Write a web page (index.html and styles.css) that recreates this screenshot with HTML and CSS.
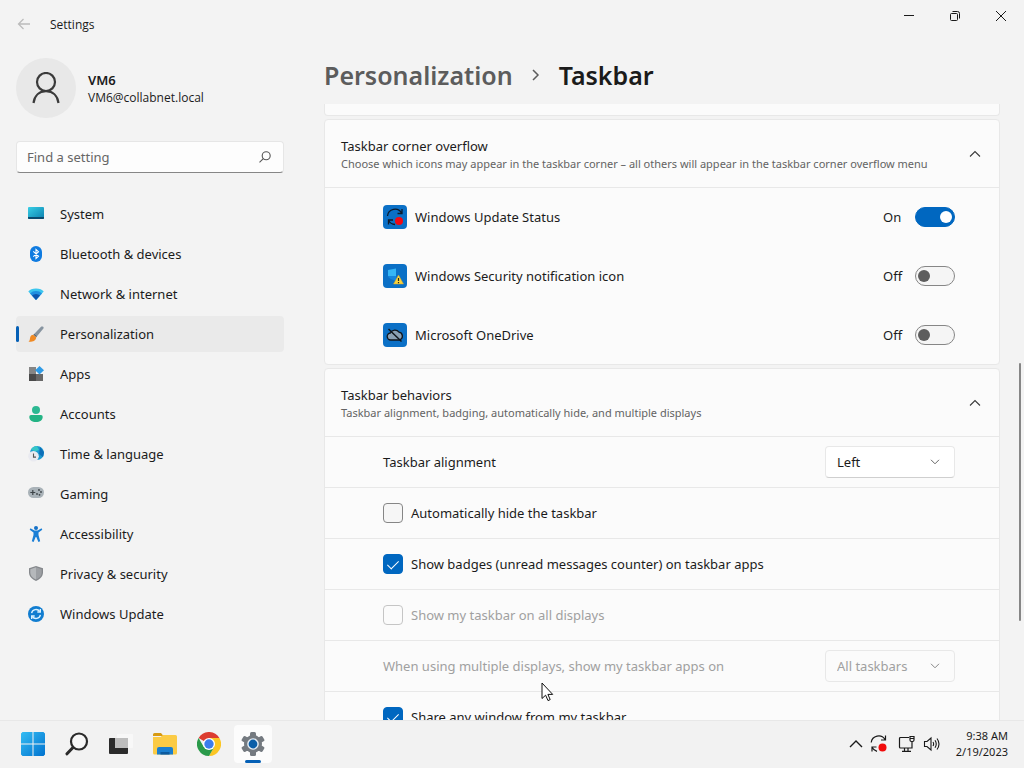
FILE: index.html
```html
<!DOCTYPE html>
<html lang="en">
<head>
    <meta charset="UTF-8">
    <meta name="viewport" content="width=device-width, initial-scale=1.0">
    <title>Settings</title>
    <link rel="stylesheet" href="styles.css">
</head>
<body>
    <div class="window">
        <header class="titlebar">
            <button class="back" aria-label="Back" disabled>
                <svg width="14" height="12" viewBox="0 0 14 12" fill="none" stroke="#bcbcbc" stroke-width="1.3"><path d="M13 6H1.5M6.5 1L1.5 6l5 5" /></svg>
            </button>
            <span class="app-name">Settings</span>
            <div class="window-buttons">
                <button aria-label="Minimize"><svg width="10" height="10" viewBox="0 0 10 10" fill="none" stroke="#1a1a1a"><path d="M0 4.5h10" /></svg></button>
                <button aria-label="Restore"><svg width="10" height="10" viewBox="0 0 10 10" fill="none" stroke="#1a1a1a"><rect x=".5" y="2.5" width="7" height="7" rx="1" /><path d="M2.5.5H7.500Q9.500.5 9.500 2.500V7.500" /></svg></button>
                <button aria-label="Close"><svg width="10" height="10" viewBox="0 0 10 10" fill="none" stroke="#1a1a1a"><path d="M0 0l10 10M10 0L0 10" /></svg></button>
            </div>
        </header>

        <div class="layout">
            <aside class="sidebar">
                <a class="profile" href="#">
                    <span class="avatar">
                        <svg width="28" height="32" viewBox="0 0 28 32" fill="none" stroke="#3a3a3a" stroke-width="2.2"><circle cx="14" cy="10" r="9" /><path d="M1.500 31C2.500 23.500 7.500 19.200 14 19.200S25.500 23.500 26.500 31" /></svg>
                    </span>
                    <span class="who">
                        <strong>VM6</strong>
                        <small>VM6@collabnet.local</small>
                    </span>
                </a>

                <div class="search">
                    <input type="text" placeholder="Find a setting" aria-label="Find a setting">
                    <svg width="12" height="12" viewBox="0 0 12 12" fill="none" stroke="#555" stroke-width="1.1"><circle cx="7.200" cy="4.700" r="4" /><path d="M4.300 7.600L.5 11.400" /></svg>
                </div>

                <nav class="nav">
                    <a href="#">
                        <svg width="16" height="16" viewBox="0 0 16 16"><defs><linearGradient id="gSys" x1="0" y1="0" x2="1" y2="1"><stop offset="0" stop-color="#38cfe6" /><stop offset="1" stop-color="#0b7fae" /></linearGradient></defs><rect y="1" width="16" height="12" rx="1" fill="url(#gSys)" /><path d="M0 11h16v1a1 1 0 0 1-1 1H1a1 1 0 0 1-1-1z" fill="#0a4a6e" /></svg>
                        System
                    </a>
                    <a href="#">
                        <svg width="16" height="16" viewBox="0 0 16 16"><rect x="2" width="12" height="16" rx="6" fill="#0f7be0" /><path d="M5.300 5.300l5.200 5L8 12.600V3.400l2.500 2.300-5.200 5" fill="none" stroke="#fff" stroke-width="1.100" /></svg>
                        Bluetooth &amp; devices
                    </a>
                    <a href="#">
                        <svg width="16" height="16" viewBox="0 0 16 16"><path d="M.3 5.500Q2.500 2.500 8 2.500T15.700 5.500L8 14z" fill="#3cc6ee" /><path d="M2 7.400Q4.500 5 8 5T14 7.400L8 14z" fill="#1f8fe0" /><path d="M4 9.600Q5.500 8 8 8T12 9.600L8 14z" fill="#0d55ad" /></svg>
                        Network &amp; internet
                    </a>
                    <a class="active" href="#" aria-current="page">
                        <svg width="16" height="16" viewBox="0 0 16 16"><path d="M14.600.4c1 .3 1.300 1.200.8 2L9.200 10 6.400 7.700 13.300.6z" fill="#8794a0" /><path d="M6.400 7.700L9.200 10l-1 1.200-2.900-2.400z" fill="#5d6872" /><path d="M5.200 8.700l3 2.500c0 3.300-3.400 4.800-7.700 4.500 1.700-1.200 1.100-2.600 1.800-4.700.5-1.500 1.700-2.300 2.900-2.300z" fill="#f08a24" /></svg>
                        Personalization
                    </a>
                    <a href="#">
                        <svg width="16" height="16" viewBox="0 0 16 16"><rect x="1" y="1" width="7" height="7" fill="#858585" /><rect x="1" y="8" width="7" height="7" fill="#4a4a4a" /><rect x="8" y="8" width="7" height="7" fill="#686868" /><path d="M11.500 0L16 4.300 11.500 8.600 7.200 4.300z" fill="#2f9be6" /></svg>
                        Apps
                    </a>
                    <a href="#">
                        <svg width="16" height="16" viewBox="0 0 16 16"><circle cx="8" cy="4" r="4" fill="#2cb892" /><path d="M3 9h10a1.700 1.700 0 0 1 1.700 1.700C14.700 14 12 16 8 16s-6.700-2-6.700-5.300A1.700 1.700 0 0 1 3 9z" fill="#23b384" /></svg>
                        Accounts
                    </a>
                    <a href="#">
                        <svg width="16" height="16" viewBox="0 0 16 16"><circle cx="9" cy="7" r="7" fill="#1b9ad0" /><path d="M9 0a7 7 0 0 0-6 3.500l4 2L11 4z" fill="#36c6c8" /><path d="M12 1l4 5-1 5-4-3z" fill="#0d6fb8" /><circle cx="5.500" cy="10.300" r="5.300" fill="#e9eaf0" /><path d="M5.500 7.500v3.600H8" fill="none" stroke="#555" stroke-width="1.100" /></svg>
                        Time &amp; language
                    </a>
                    <a href="#">
                        <svg width="16" height="16" viewBox="0 0 16 16"><rect y="1" width="16" height="11" rx="5.500" fill="#a9b2b8" /><path d="M4.800 4v5M2.300 6.500h5" stroke="#3c4347" stroke-width="1.200" /><g fill="#3c4347"><circle cx="11" cy="4" r=".9" /><circle cx="9" cy="8" r=".9" /><circle cx="13" cy="6" r=".9" /><circle cx="11.500" cy="8.800" r=".9" /></g></svg>
                        Gaming
                    </a>
                    <a href="#">
                        <svg width="16" height="16" viewBox="0 0 16 16"><circle cx="8" cy="2" r="2" fill="#1672c8" /><path d="M2.500 2.300L6.300 4.600h3.400l3.800-2.300.8 1.500-3.800 2.700V9l1.700 6.300-1.800.6L8.300 11h-.6l-2.100 4.900-1.800-.6L5.500 9V6.500L1.700 3.800z" fill="#1b7fd6" /></svg>
                        Accessibility
                    </a>
                    <a href="#">
                        <svg width="16" height="16" viewBox="0 0 16 16"><path d="M8 0l7 2.300v4C15 10.500 12 13.300 8 15 4 13.300 1 10.500 1 6.300v-4z" fill="#85888c" /><path d="M8 1.300l5.700 1.900v3.100c0 3.500-2.400 5.800-5.700 7.200z" fill="#9c9fa3" /><path d="M8 1.300L2.300 3.200v3.100c0 3.500 2.400 5.800 5.700 7.200z" fill="#b5b8bb" /></svg>
                        Privacy &amp; security
                    </a>
                    <a href="#">
                        <svg width="16" height="16" viewBox="0 0 16 16"><circle cx="8" cy="8" r="8" fill="#117dd0" /><g fill="none" stroke="#d9f1ff" stroke-width="1.400"><path d="M3.600 7.200A4.500 4.500 0 0 1 11.700 5.500M12.400 8.800A4.500 4.500 0 0 1 4.300 10.500" /><path d="M12.300 3v3H9.300M3.700 13v-3h3" /></g></svg>
                        Windows Update
                    </a>
                </nav>
            </aside>

            <main class="main">
                <h1 class="crumbs">
                    <a href="#">Personalization</a>
                    <svg width="8" height="12" viewBox="0 0 8 12" fill="none" stroke="#5c5c5c" stroke-width="1.500"><path d="M1 1l5 5-5 5" /></svg>
                    <span>Taskbar</span>
                </h1>

                <div class="scroller">
                    <section class="card card-tail"></section>

                    <section class="card">
                        <button class="card-head" aria-expanded="true">
                            <span>
                                <b>Taskbar corner overflow</b>
                                <small>Choose which icons may appear in the taskbar corner – all others will appear in the taskbar corner overflow menu</small>
                            </span>
                            <svg width="12" height="8" viewBox="0 0 12 8" fill="none" stroke="#3a3a3a" stroke-width="1.100"><path d="M1 6.500l5-5 5 5" /></svg>
                        </button>
                        <div class="row tall">
                            <svg width="24" height="24" viewBox="0 0 24 24"><rect width="24" height="24" rx="4" fill="#0b70c6" /><g fill="none" stroke="#0e1a2b" stroke-width="1.300"><path d="M4.500 11A7.500 7.500 0 0 1 18.500 8M19 4v4.500h-4.500M5.500 19.500V15H10M5.500 15.500A8 8 0 0 0 12 19.500" /></g><circle cx="16" cy="16" r="4" fill="#f00a14" /></svg>
                            <label for="update">Windows Update Status</label>
                            <span class="state">On</span>
                            <input id="update" class="toggle" type="checkbox" role="switch" checked>
                        </div>
                        <div class="row tall">
                            <svg width="24" height="24" viewBox="0 0 24 24"><rect width="24" height="24" rx="4" fill="#0b70c6" /><path d="M5 6l8-1.500V12H5z" fill="#35b5f5" /><path d="M5 12h8v5C8 15.500 5.300 14 5 12z" fill="#1585dc" /><path d="M15.500 11l5 9h-10z" fill="#fbd43a" stroke="#c9a23a" stroke-width=".5" /><path d="M15.500 14v3M15.500 18v1.200" stroke="#222" stroke-width="1.200" /></svg>
                            <label for="security">Windows Security notification icon</label>
                            <span class="state">Off</span>
                            <input id="security" class="toggle" type="checkbox" role="switch">
                        </div>
                        <div class="row tall">
                            <svg width="24" height="24" viewBox="0 0 24 24"><rect width="24" height="24" rx="4" fill="#0b70c6" /><path d="M8 17a3.500 3.500 0 0 1-.6-7A5 5 0 0 1 16 9.200 4 4 0 0 1 16.500 17z" fill="#8aa0b3" stroke="#10151c" stroke-width="1.300" /><path d="M5.500 6l13 12.500" stroke="#10151c" stroke-width="1.500" /></svg>
                            <label for="onedrive">Microsoft OneDrive</label>
                            <span class="state">Off</span>
                            <input id="onedrive" class="toggle" type="checkbox" role="switch">
                        </div>
                    </section>

                    <section class="card">
                        <button class="card-head" aria-expanded="true">
                            <span>
                                <b>Taskbar behaviors</b>
                                <small>Taskbar alignment, badging, automatically hide, and multiple displays</small>
                            </span>
                            <svg width="12" height="8" viewBox="0 0 12 8" fill="none" stroke="#3a3a3a" stroke-width="1.100"><path d="M1 6.500l5-5 5 5" /></svg>
                        </button>
                        <div class="row">
                            <label for="alignment">Taskbar alignment</label>
                            <div class="select">
                                <select id="alignment"><option>Left</option><option>Center</option></select>
                                <svg width="10" height="6" viewBox="0 0 10 6" fill="none" stroke="#666"><path d="M1 .8L5 4.800 9 .8" /></svg>
                            </div>
                        </div>
                        <div class="row">
                            <input id="autohide" class="check" type="checkbox">
                            <label for="autohide">Automatically hide the taskbar</label>
                        </div>
                        <div class="row">
                            <input id="badges" class="check" type="checkbox" checked>
                            <label for="badges">Show badges (unread messages counter) on taskbar apps</label>
                        </div>
                        <div class="row disabled">
                            <input id="all" class="check" type="checkbox" disabled>
                            <label for="all">Show my taskbar on all displays</label>
                        </div>
                        <div class="row disabled">
                            <label for="multi">When using multiple displays, show my taskbar apps on</label>
                            <div class="select">
                                <select id="multi" disabled><option>All taskbars</option></select>
                                <svg width="10" height="6" viewBox="0 0 10 6" fill="none" stroke="#888"><path d="M1 .8L5 4.800 9 .8" /></svg>
                            </div>
                        </div>
                        <div class="row">
                            <input id="share" class="check" type="checkbox" checked>
                            <label for="share">Share any window from my taskbar</label>
                        </div>
                    </section>
                    <div class="thumb"></div>
                </div>
            </main>
        </div>
    </div>

    <footer class="taskbar">
        <div class="apps">
            <button aria-label="Start">
                <svg width="24" height="24" viewBox="0 0 24 24"><defs><linearGradient id="gWin" x1="0" y1="0" x2="1" y2="1"><stop offset="0" stop-color="#35bdf3" /><stop offset="1" stop-color="#0072cf" /></linearGradient></defs><path d="M1.500 0H11.500V11.500H0V1.500zM12.500 0H22.500L24 1.500V11.500H12.500zM0 12.500H11.500V24H1.500L0 22.500zM12.500 12.500H24V22.500L22.500 24H12.500z" fill="url(#gWin)" /></svg>
            </button>
            <button aria-label="Search">
                <svg width="24" height="24" viewBox="0 0 24 24" fill="none" stroke="#2b2b2b"><circle cx="14" cy="9.500" r="8" fill="#f8f8f8" stroke-width="2.200" /><path d="M8 15.500L2 21.800" stroke-width="3" stroke-linecap="round" /></svg>
            </button>
            <button aria-label="Task view">
                <svg width="24" height="24" viewBox="0 0 24 24"><rect x="8" y="2" width="16" height="14" rx="1" fill="#f8f8f8" /><rect y="6" width="19" height="16" rx="1" fill="#2b2b2b" /><path d="M6 6h13v10H6z" fill="#bdbdbd" /></svg>
            </button>
            <button aria-label="File Explorer">
                <svg width="24" height="24" viewBox="0 0 24 24"><path d="M0 2.500A1.500 1.500 0 0 1 1.500 1H8l2.500 3H0z" fill="#d79a12" /><path d="M0 5h7.500L10 3h12.500A1.500 1.500 0 0 1 24 4.500V21a1.500 1.500 0 0 1-1.500 1.500h-21A1.500 1.500 0 0 1 0 21z" fill="#fbcb45" /><path d="M4 22.500V17a2 2 0 0 1 2-2h12a2 2 0 0 1 2 2v5.500z" fill="#1a7fd0" /><path d="M7.500 22.500V20h9v2.500z" fill="#0c5a9e" /></svg>
            </button>
            <button aria-label="Google Chrome">
                <svg width="24" height="24" viewBox="0 0 24 24"><path d="M12 12L1.600 6A12 12 0 0 1 22.400 6z" fill="#dc3c30" /><path d="M12 6h10.400A12 12 0 0 1 12 24l5.200-9z" fill="#fbc624" /><path d="M1.600 6A12 12 0 0 0 12 24l5.200-9H6.800z" fill="#2a9a4a" /><circle cx="12" cy="12" r="6" fill="#fff" /><circle cx="12" cy="12" r="4.700" fill="#3b7ded" /></svg>
            </button>
            <button class="running" aria-label="Settings">
                <svg width="24" height="24" viewBox="0 0 24 24"><g fill="#747a80"><circle cx="12" cy="12" r="9" /><rect x="9" y="0" width="6" height="24" rx="1.500" /><rect x="9" y="0" width="6" height="24" rx="1.500" transform="rotate(60 12 12)" /><rect x="9" y="0" width="6" height="24" rx="1.500" transform="rotate(120 12 12)" /></g><circle cx="12" cy="12" r="5.800" fill="#e6eef5" /><circle cx="12" cy="12" r="4.400" fill="#0c5fa8" /></svg>
            </button>
        </div>
        <div class="tray">
            <button aria-label="Show hidden icons"><svg width="14" height="8" viewBox="0 0 14 8" fill="none" stroke="#1a1a1a" stroke-width="1.400"><path d="M1 7l6-6 6 6" /></svg></button>
            <button aria-label="Windows Update"><svg width="18" height="18" viewBox="0 0 18 18" fill="none" stroke="#1a1a1a" stroke-width="1.200"><path d="M1.200 7.500A7.500 7.500 0 0 1 15 4.500M15.500.5v4.500H11M2 16.500V12h4.500M2 12.300A8 8 0 0 0 7 16.400" /><circle cx="12.500" cy="12.500" r="4" fill="#f10b0b" stroke="none" /></svg></button>
            <button class="net" aria-label="Network"><svg width="18" height="18" viewBox="0 0 18 18" fill="none" stroke="#1a1a1a" stroke-width="1.200"><path d="M11 2.500H2.500a1 1 0 0 0-1 1v8.500a1 1 0 0 0 1 1H14V6.500M6.500 13v3M10 13v3M4 16.400h9" /><path d="M12 1.500h4V5a1.500 1.500 0 0 1-1.500 1.500h-1A1.500 1.500 0 0 1 12 5zM12 3.500h4" /></svg></button>
            <button aria-label="Volume"><svg width="18" height="16" viewBox="0 0 18 16" fill="none" stroke="#1a1a1a" stroke-width="1.100"><path d="M1.500 5.500H4L8 2v12l-4-3.500H1.500z" /><path d="M10 6q1.300 2 0 4M12 4.300q2.500 3.700 0 7.400M14 2.500q4 5.500 0 11" /></svg></button>
            <div class="clock">
                <time>9:38 AM</time>
                <time>2/19/2023</time>
            </div>
        </div>
    </footer>

    <svg class="cursor" width="13" height="20" viewBox="0 0 13 20"><path d="M1 1v15.500l3.600-3.300 2.400 5.400 2.200-1-2.300-5.200h4.800z" fill="#fff" stroke="#111" /></svg>
</body>
</html>
```
FILE: styles.css
```css
* {
    box-sizing: border-box;
}
body {
    margin: 0;
    height: 100vh;
    display: flex;
    flex-direction: column;
    overflow: hidden;
    background-color: #f3f3f3;
    color: #1b1b1b;
    font-family: 'Noto Sans', 'Open Sans', sans-serif;
    font-size: 13px;
    line-height: 20px;
}
button, input, select {
    font: inherit;
    color: inherit;
}
button {
    border: none;
    background: none;
    padding: 0;
}
a {
    color: inherit;
    text-decoration: none;
}
svg {
    flex: none;
}
.window {
    flex: 1;
    min-height: 0;
    display: flex;
    flex-direction: column;
}

/* title bar */
.titlebar {
    height: 48px;
    flex: none;
    display: flex;
    align-items: center;
    padding-left: 17px;
}
.back {
    width: 14px;
    display: flex;
}
.app-name {
    margin-left: 19px;
    padding-top: 2px;
    flex: 1;
    font-family: 'Open Sans', sans-serif;
    font-size: 12px;
}
.window-buttons {
    display: flex;
    align-self: flex-start;
}
.window-buttons button {
    width: 46px;
    height: 32px;
    display: flex;
    align-items: center;
    justify-content: center;
}

/* sidebar */
.layout {
    flex: 1;
    min-height: 0;
    display: flex;
}
.sidebar {
    width: 300px;
    flex: none;
    padding: 10px 16px 0;
    display: flex;
    flex-direction: column;
    gap: 23px;
}
.profile {
    display: flex;
    align-items: center;
    gap: 12px;
}
.avatar {
    width: 60px;
    height: 60px;
    border-radius: 50%;
    background-color: #e8e8e8;
    display: flex;
    align-items: center;
    justify-content: center;
}
.who {
    display: flex;
    flex-direction: column;
    padding-top: 2px;
}
.who strong {
    font-weight: 600;
    line-height: 18px;
}
.who small {
    font-family: 'Open Sans', sans-serif;
    font-size: 12px;
    line-height: 18px;
}
.search {
    display: flex;
    align-items: center;
    height: 32px;
    padding: 0 12px 0 10px;
    background-color: #fdfdfd;
    border: 1px solid #e6e6e6;
    border-bottom-color: #868686;
    border-radius: 4px;
}
.search input {
    flex: 1;
    min-width: 0;
    border: none;
    padding: 0;
    background: none;
    outline: none;
}
.search input::placeholder {
    color: #666;
    opacity: 1;
}
.nav {
    display: flex;
    flex-direction: column;
    gap: 4px;
}
.nav a {
    height: 36px;
    display: flex;
    align-items: center;
    gap: 16px;
    padding-left: 12px;
    border-radius: 4px;
}
.nav a.active {
    background-color: #eaeaea;
    padding-left: 0;
}
.nav a.active::before {
    content: '';
    width: 3px;
    height: 16px;
    margin-right: -7px;
    border-radius: 2px;
    background-color: #0560b6;
}

/* page */
.main {
    flex: 1;
    min-width: 0;
    display: flex;
    flex-direction: column;
}
.crumbs {
    height: 56px;
    flex: none;
    margin: 0;
    padding: 0 24px 2px;
    display: flex;
    align-items: center;
    gap: 19px;
    font-size: 25px;
    font-weight: 600;
    line-height: 36px;
}
.crumbs a {
    color: #5c5c5c;
}
.scroller {
    flex: 1;
    min-height: 0;
    position: relative;
    overflow: hidden;
    padding: 0 24px;
    display: flex;
    flex-direction: column;
    gap: 3px;
}
.card {
    flex: none;
    background-color: #fbfbfb;
    border: 1px solid #e8e8e8;
    border-radius: 4px;
}
.card-tail {
    height: 12px;
    border-top: none;
    border-radius: 0 0 4px 4px;
}
.card-head {
    width: 100%;
    height: 67px;
    padding: 0 18px 0 16px;
    display: flex;
    align-items: center;
    justify-content: space-between;
    text-align: left;
}
.card-head span {
    display: flex;
    flex-direction: column;
    padding-top: 2px;
}
.card-head b {
    font-weight: 400;
    line-height: 18px;
}
.card-head small {
    font-size: 11px;
    line-height: 18px;
    color: #636363;
}
.row {
    height: 51px;
    display: flex;
    align-items: center;
    gap: 8px;
    padding: 0 44px 0 58px;
    border-top: 1px solid #e8e8e8;
}
.row label {
    flex: 1;
}
.row.tall {
    height: 59px;
    border-top: none;
}
.card-head + .row.tall {
    border-top: 1px solid #e8e8e8;
}
.disabled {
    color: #a0a0a0;
}
.state {
    width: 24px;
}
.toggle {
    appearance: none;
    width: 40px;
    height: 20px;
    margin: 0;
    padding: 0 2px;
    display: flex;
    align-items: center;
    border: 1px solid #868686;
    border-radius: 10px;
    background-color: #f5f5f5;
}
.toggle::after {
    content: '';
    width: 12px;
    height: 12px;
    border-radius: 50%;
    background-color: #5d5d5d;
}
.toggle:checked {
    justify-content: flex-end;
    background-color: #0067c0;
    border-color: #0067c0;
}
.toggle:checked::after {
    background-color: #fff;
}
.check {
    appearance: none;
    width: 20px;
    height: 20px;
    margin: 0;
    display: flex;
    justify-content: center;
    border: 1px solid #868686;
    border-radius: 4px;
    background-color: #f6f6f6;
}
.check:checked {
    background-color: #0067c0;
    border-color: #0067c0;
}
.check:checked::after {
    content: '';
    width: 5px;
    height: 10px;
    margin-top: 3px;
    border: solid #fff;
    border-width: 0 1px 1px 0;
    transform: rotate(45deg);
}
.check:disabled {
    border-color: #c5c5c5;
    background-color: #fbfbfb;
}
.select {
    width: 130px;
    display: grid;
    align-items: center;
}
.select select, .select svg {
    grid-area: 1 / 1;
}
.select select {
    appearance: none;
    height: 32px;
    padding: 0 11px;
    border: 1px solid #e8e8e8;
    border-bottom-color: #cfcfcf;
    border-radius: 4px;
    background-color: #fff;
}
.select select:disabled {
    background-color: #fbfbfb;
    border-color: #e8e8e8;
    color: #a0a0a0;
    opacity: 1;
}
.select svg {
    justify-self: end;
    margin-right: 15px;
    pointer-events: none;
}
.thumb {
    position: absolute;
    top: 42%;
    right: 3px;
    width: 2px;
    height: 42%;
    border-radius: 1px;
    background-color: #868686;
}

/* taskbar */
.taskbar {
    height: 48px;
    flex: none;
    display: flex;
    align-items: center;
    justify-content: space-between;
    padding: 0 16px 2px 14px;
    border-top: 1px solid #e8e8e8;
    background-color: #f2f2f2;
}
.apps {
    display: flex;
    gap: 6px;
}
.apps button {
    width: 38px;
    height: 38px;
    display: flex;
    align-items: center;
    justify-content: center;
    border-radius: 4px;
}
.apps .running {
    position: relative;
    background-color: #fcfcfc;
}
.running::after {
    content: '';
    position: absolute;
    bottom: 0;
    left: 11px;
    width: 16px;
    height: 3px;
    border-radius: 2px;
    background-color: #0560b6;
}
.tray {
    display: flex;
    align-items: center;
    gap: 7px;
}
.tray button {
    display: flex;
}
.tray .net {
    margin-left: 3px;
}
.clock {
    display: flex;
    flex-direction: column;
    align-items: flex-end;
    margin-left: 8px;
    font-size: 11px;
    line-height: 16px;
}

/* mouse pointer */
.cursor {
    position: absolute;
    left: 541px;
    top: 682px;
}
```
